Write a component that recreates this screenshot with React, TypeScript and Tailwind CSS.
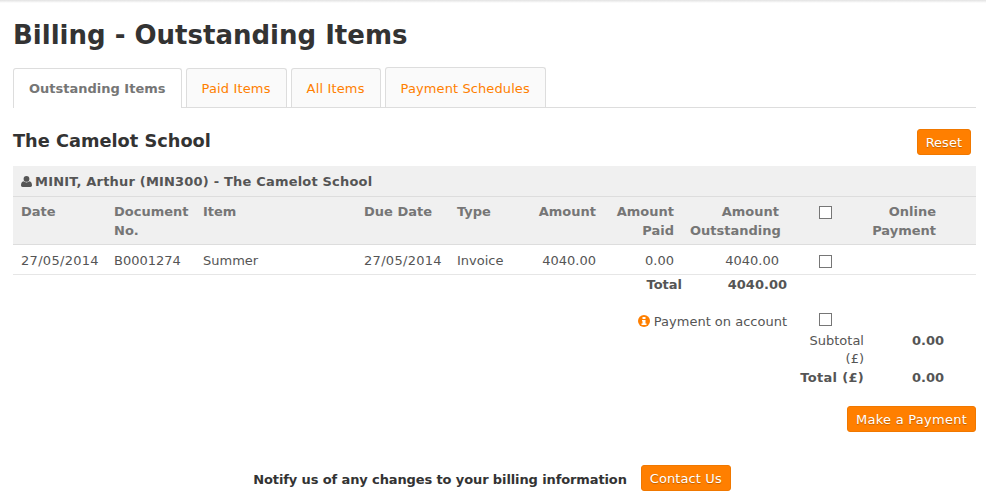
function Check() {
  return <span className="inline-block w-[13px] h-[13px] border border-[#767676] bg-white align-middle" />;
}

function Btn({ children, className = "" }: { children: React.ReactNode; className?: string }) {
  return (
    <button className={`h-[26px] px-2 rounded-[3px] bg-[#ff7f00] border border-[#f07800] text-white text-[13px] leading-none [text-shadow:0_1px_1px_rgba(0,0,0,0.25)] ${className}`}>
      {children}
    </button>
  );
}

function Tab({ children, active = false, className = "" }: { children: React.ReactNode; active?: boolean; className?: string }) {
  return active ? (
    <div className={`relative h-[40px] -mb-px px-[15px] pt-[12px] border border-b-0 border-[#ddd] rounded-t-[3px] bg-white text-[#767676] font-bold text-[13px] leading-[16px] ${className}`}>
      {children}
    </div>
  ) : (
    <div className={`px-[15px] border border-b-0 border-[#ddd] rounded-t-[3px] bg-[#fafafa] text-[#ff7f00] text-[13px] leading-[16px] ${className}`}>
      {children}
    </div>
  );
}

export default function App() {
  const th = "px-2 pt-[5px] pb-[4px] align-top font-bold text-[#767676] text-[13px] leading-[19px]";
  const td = "px-2 pt-[6px] pb-[4px] align-middle text-[#555] leading-[19px] h-[30px]";
  return (
    <div className="w-[986px] h-[500px] overflow-hidden bg-white text-[13px] text-[#555] font-['Verdana','DejaVu_Sans',sans-serif]">
      <div className="h-[3px] bg-gradient-to-b from-[#e2e2e2] to-white" />
      <div className="pl-[13px] pr-[10px]">
        <h1 className="mt-[15px] text-[26px] leading-[34px] font-bold text-[#333]">Billing - Outstanding Items</h1>

        <div className="mt-[16px] flex items-end gap-1 border-b border-[#ddd] h-[40px]">
          <Tab active>Outstanding Items</Tab>
          <Tab className="h-[39px] pt-[12px] tracking-[0.15px]">Paid Items</Tab>
          <Tab className="h-[39px] pt-[12px] tracking-[0.15px]">All Items</Tab>
          <Tab className="h-[40px] pt-[13px] tracking-[0.1px]">Payment Schedules</Tab>
        </div>

        <div className="mt-[20px] flex items-center justify-between h-[28px] pr-[5px]">
          <h2 className="mb-[2px] text-[17.75px] leading-[24px] font-bold text-[#333]">The Camelot School</h2>
          <Btn>Reset</Btn>
        </div>

        <div className="mt-[10px] h-[31px] flex items-center gap-[3px] pl-2 bg-[#f0f0f0] border-b border-[#ddd] font-bold text-[#555] tracking-[0.19px]">
          <svg width="11" height="11" viewBox="0 0 11 11" fill="#555">
            <circle cx="5.5" cy="2.9" r="2.9" />
            <path d="M0 9.3C0 7 1 5.6 2.4 5.3 3.2 6 4.3 6.4 5.5 6.4S7.8 6 8.6 5.3C10 5.6 11 7 11 9.3 11 10.3 10.3 11 9.4 11H1.6C.7 11 0 10.3 0 9.3Z" />
          </svg>
          <span className="mt-[2px]">MINIT, Arthur (MIN300) - The Camelot School</span>
        </div>

        <table className="w-[963px] table-fixed border-collapse">
          <colgroup>
            <col className="w-[93px]" />
            <col className="w-[89px]" />
            <col className="w-[161px]" />
            <col className="w-[93px]" />
            <col className="w-[81px]" />
            <col className="w-[74px]" />
            <col className="w-[78px]" />
            <col className="w-[105px]" />
            <col className="w-[77px]" />
            <col className="w-[80px]" />
            <col className="w-[32px]" />
          </colgroup>
          <thead>
            <tr className="bg-[#f0f0f0] border-b border-[#ddd]">
              <th className={`${th} text-left`}>Date</th>
              <th className={`${th} text-left`}>Document No.</th>
              <th className={`${th} text-left`}>Item</th>
              <th className={`${th} text-left`}>Due Date</th>
              <th className={`${th} text-left`}>Type</th>
              <th className={`${th} text-right`}>Amount</th>
              <th className={`${th} text-right`}>Amount Paid</th>
              <th className={`${th} text-right`}>Amount Outstanding</th>
              <th className={`${th} text-center`}><Check /></th>
              <th className={`${th} text-right`}>Online Payment</th>
              <th className={th} />
            </tr>
          </thead>
          <tbody>
            <tr className="border-b border-[#e6e6e6]">
              <td className={`${td} tracking-[0.3px]`}>27/05/2014</td>
              <td className={td}>B0001274</td>
              <td className={td}>Summer</td>
              <td className={`${td} tracking-[0.3px]`}>27/05/2014</td>
              <td className={td}>Invoice</td>
              <td className={`${td} text-right`}>4040.00</td>
              <td className={`${td} text-right`}>0.00</td>
              <td className={`${td} text-right`}>4040.00</td>
              <td className={`${td} text-center`}><Check /></td>
              <td className={td} />
              <td className={td} />
            </tr>
            <tr className="h-[19px] leading-[19px] font-bold">
              <td colSpan={7} className="text-right">Total</td>
              <td className="text-right">4040.00</td>
              <td colSpan={3} />
            </tr>
            <tr className="h-[38px] leading-[19px]">
              <td colSpan={8} className="text-right align-bottom">
                <span className="inline-flex items-center gap-[4px]">
                  <svg width="12" height="12" viewBox="0 0 12 12">
                    <circle cx="6" cy="6" r="6" fill="#ff7f00" />
                    <rect x="4.5" y="2" width="3" height="2" fill="#fff" />
                    <path d="M4 5h3.5v3.5H8.5V10h-5V8.5h1V6.2H4z" fill="#fff" />
                  </svg>
                  Payment on account
                </span>
              </td>
              <td className="text-center align-bottom pb-[4px]"><Check /></td>
              <td colSpan={2} />
            </tr>
            <tr className="leading-[18px]">
              <td colSpan={8} />
              <td className="text-right align-top pl-4">Subtotal (£)</td>
              <td className="text-right align-top font-bold">0.00</td>
              <td />
            </tr>
            <tr className="leading-[19px] font-bold">
              <td colSpan={8} />
              <td className="text-right whitespace-nowrap tracking-[0.3px]">Total (£)</td>
              <td className="text-right">0.00</td>
              <td />
            </tr>
          </tbody>
        </table>

        <div className="mt-[19px] flex justify-end">
          <Btn className="tracking-[0.25px]">Make a Payment</Btn>
        </div>

        <div className="mt-[33px] flex items-center justify-center gap-[14px] pr-[5px] font-bold text-[#333] tracking-[-0.115px]">
          <span className="mt-[4px]">Notify us of any changes to your billing information</span>
          <Btn className="font-normal tracking-[0.1px]">Contact Us</Btn>
        </div>
      </div>
    </div>
  );
}
